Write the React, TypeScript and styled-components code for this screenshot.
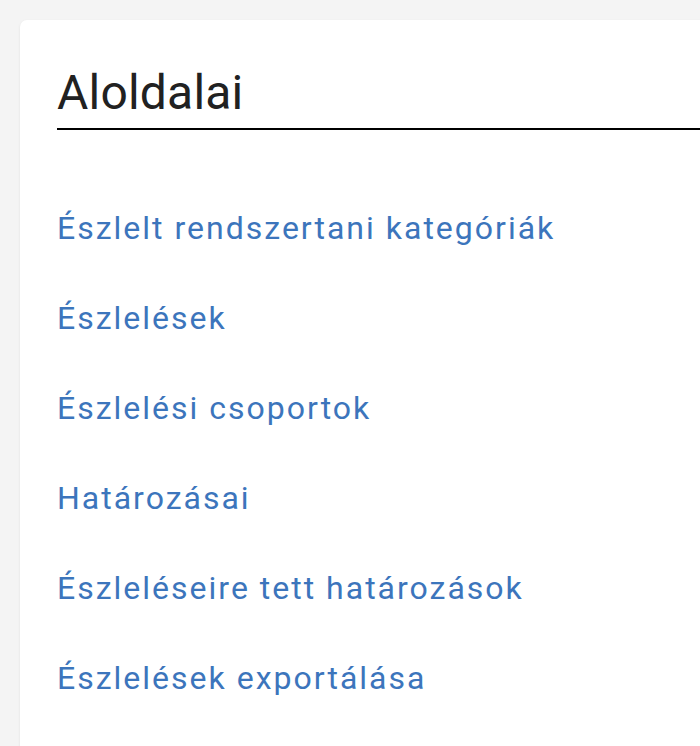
import React from "react";
import styled, { createGlobalStyle } from "styled-components";

const Global = createGlobalStyle`
  html, body { margin: 0; padding: 0; background: #f4f4f4; overflow: hidden; }
  body { font-family: Roboto, "Noto Sans", Arial, sans-serif; }
`;

const Page = styled.div`
  padding: 20px 0 0 20px;
  width: 760px;
`;

const Card = styled.section`
  background: #fff;
  border-radius: 7px;
  box-shadow: 0 1px 3px rgba(0, 0, 0, 0.08);
  padding: 41px 0 40px 37px;
  min-height: 760px;
`;

const Title = styled.h2`
  margin: 0;
  padding-bottom: 3px;
  font-size: 48px;
  font-weight: 400;
  line-height: 64px;
  letter-spacing: 0.2px;
  color: #212121;
  border-bottom: 2px solid #000;
`;

const LinkList = styled.ul`
  list-style: none;
  margin: 0;
  padding: 76px 0 0 0;
  display: flex;
  flex-direction: column;
  gap: 45px;
`;

const Item = styled.li`
  font-size: 32px;
  line-height: 45px;
  letter-spacing: 2px;
`;

const Link = styled.a`
  color: #3c75bc;
  text-decoration: none;
`;

const links = [
  "Észlelt rendszertani kategóriák",
  "Észlelések",
  "Észlelési csoportok",
  "Határozásai",
  "Észleléseire tett határozások",
  "Észlelések exportálása",
];

export default function App() {
  return (
    <>
      <Global />
      <Page>
        <Card>
          <Title>Aloldalai</Title>
          <LinkList>
            {links.map((l) => (
              <Item key={l}>
                <Link href="#">{l}</Link>
              </Item>
            ))}
          </LinkList>
        </Card>
      </Page>
    </>
  );
}
